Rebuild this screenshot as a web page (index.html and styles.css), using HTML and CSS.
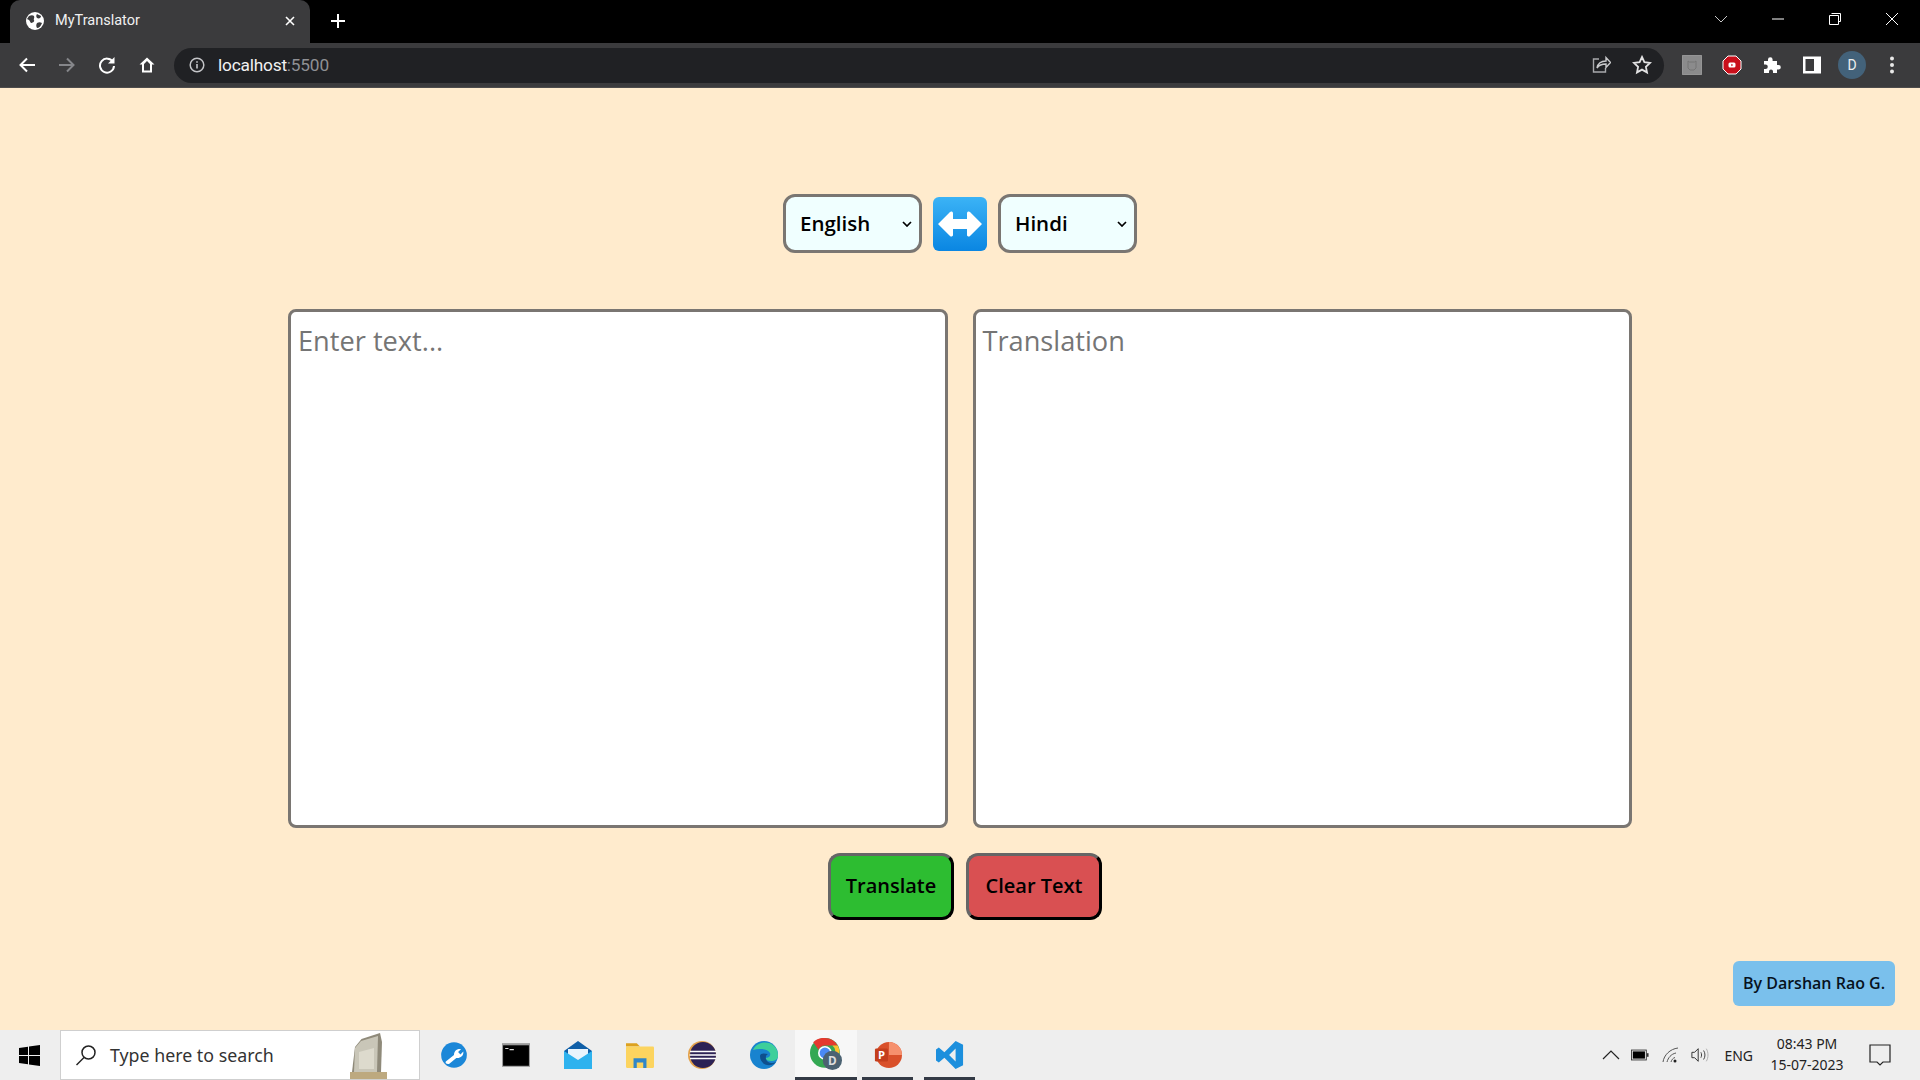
FILE: index.html
```html
<!DOCTYPE html>
<html lang="en">
<head>
  <meta charset="UTF-8" />
  <title>MyTranslator</title>
  <link rel="stylesheet" href="styles.css">
</head>
<body>

  <!-- Browser frame -->
  <header class="browser">
    <div class="tabstrip">
      <div class="tab">
        <svg class="favicon" viewBox="0 0 18 18"><circle cx="9" cy="9" r="9" fill="#fff"/><path d="M3 4c2-1 4-1 5 0 1 2-1 3 0 4 1 2-2 3-3 3-1-1-1-2-2-3L1 7zM11 2c1 1 3 1 4 2 0 2-2 3-4 2-1-1-1-3 0-4zM11 11c2-1 3-1 5 0-1 3-3 5-5 5-1-2-1-3 0-5z" fill="#3b3b3d"/></svg>
        <span class="tab-title">MyTranslator</span>
        <svg class="tab-close" viewBox="0 0 10 10"><path d="M1 1l8 8M9 1l-8 8" stroke="#fff" stroke-width="1.6"/></svg>
      </div>
      <svg class="new-tab" viewBox="0 0 14 14"><path d="M7 0v14M0 7h14" stroke="#fff" stroke-width="2"/></svg>
      <div class="window-controls">
        <svg class="win-ico" viewBox="0 0 14 14"><path d="M1 4l6 6 6-6" fill="none" stroke="#c8c8c8"/></svg>
        <svg class="win-ico" viewBox="0 0 14 14"><path d="M1 7h12" stroke="#fff"/></svg>
        <svg class="win-ico" viewBox="0 0 14 14"><path d="M3.500 1.500h9v8h-2M1.500 3.500h9v9h-9z" fill="none" stroke="#fff"/></svg>
        <svg class="win-ico" viewBox="0 0 14 14"><path d="M1 1l12 12M13 1L1 13" stroke="#fff"/></svg>
      </div>
    </div>
    <div class="toolbar">
      <svg class="tool-ico" viewBox="0 0 18 18"><path d="M17 9H3M9 2.500L2.500 9 9 15.500" fill="none" stroke="#fff" stroke-width="2"/></svg>
      <svg class="tool-ico" viewBox="0 0 18 18"><path d="M1 9h14M9 2.500L15.500 9 9 15.500" fill="none" stroke="#85868a" stroke-width="2"/></svg>
      <svg class="tool-ico" viewBox="0 0 18 18"><path d="M15 6a7 7 0 1 0 1 4" fill="none" stroke="#fff" stroke-width="2"/><path d="M16.500 1v6.500H10z" fill="#fff"/></svg>
      <svg class="tool-ico" viewBox="0 0 18 18"><path d="M9 1.500L1.500 8.500H4v8h10v-8h2.500zM6 14.500V8l3-3 3 3v6.500z" fill="#fff" fill-rule="evenodd"/></svg>
      <div class="omnibox">
        <svg class="info-ico" viewBox="0 0 16 16"><circle cx="8" cy="8" r="6.800" fill="none" stroke="#c4c5c8" stroke-width="1.500"/><path d="M8 7v4.500M8 4.200v1.600" stroke="#c4c5c8" stroke-width="1.600"/></svg>
        <span class="url">localhost<span class="url-port">:5500</span></span>
        <svg class="omni-ico share" viewBox="0 0 20 20"><path d="M8 4H2.500v13h12v-4" fill="none" stroke="#a8a9ac" stroke-width="1.400"/><path d="M6 13c1-5 5-7 9-7V2.500l4.500 5-4.500 5V9c-4 0-7 1-9 4z" fill="none" stroke="#c9cacc" stroke-width="1.400"/></svg>
        <svg class="omni-ico" viewBox="0 0 20 20"><path d="M10 2l2.400 5.200 5.600.7-4.100 3.900 1.100 5.600-5-2.800-5 2.800 1.100-5.600L2 7.900l5.600-.7z" fill="none" stroke="#e2e2e3" stroke-width="1.800"/></svg>
      </div>
      <div class="extensions">
        <svg class="ext-ico" viewBox="0 0 20 20"><rect width="20" height="20" rx="2" fill="#8b8b8c" stroke="#9f9f9f"/><path d="M6 6l1.500 1h5L14 6v7l-2 2H8l-2-2z" fill="none" stroke="#757575"/></svg>
        <svg class="ext-ico" viewBox="0 0 20 20"><path d="M6 1h8l5 5v8l-5 5H6l-5-5V6z" fill="#c90f1b" stroke="#fff" stroke-width="1"/><rect x="6.500" y="7.500" width="7" height="5" rx="1.500" fill="#fff"/><path d="M9.300 8.800l2 1.200-2 1.200z" fill="#c90f1b"/></svg>
        <svg class="ext-ico" viewBox="0 0 20 20"><path d="M2 6h4V4.500a2.300 2.300 0 0 1 4.600 0V6H15v4h1.500a2.300 2.300 0 0 1 0 4.600H15V18h-4v-1.500a2 2 0 0 0-4 0V18H2v-4h1.500a2.300 2.300 0 0 0 0-4.600H2z" fill="#fff"/></svg>
        <svg class="ext-ico" viewBox="0 0 20 20"><path d="M1 1.500h18v17H1zM3.500 4v12H12V4z" fill="#fff" fill-rule="evenodd"/></svg>
        <span class="avatar">D</span>
        <svg class="ext-ico" viewBox="0 0 20 20"><circle cx="10" cy="3.500" r="2" fill="#e8e8e8"/><circle cx="10" cy="10" r="2" fill="#e8e8e8"/><circle cx="10" cy="16.500" r="2" fill="#e8e8e8"/></svg>
      </div>
    </div>
  </header>

  <!-- Main Content -->
  <main class="page">
    <div class="lang-row">
      <select class="lang-select">
        <option>English</option>
      </select>
      <button class="swap-btn" aria-label="Swap languages">
        <svg viewBox="0 0 54 54" class="swap-ico"><path d="M5 27l12-12c1-1 3-.5 3 1v6h14v-6c0-1.500 2-2 3-1l12 12-12 12c-1 1-3 .5-3-1v-6H20v6c0 1.500-2 2-3 1z" fill="#fff"/></svg>
      </button>
      <select class="lang-select">
        <option>Hindi</option>
      </select>
    </div>

    <div class="text-row">
      <textarea class="text-box" placeholder="Enter text..."></textarea>
      <textarea class="text-box" placeholder="Translation" readonly></textarea>
    </div>

    <div class="action-row">
      <button class="action-btn translate">Translate</button>
      <button class="action-btn clear">Clear Text</button>
    </div>

    <div class="credit">By Darshan Rao G.</div>
  </main>

  <!-- Taskbar -->
  <footer class="taskbar">
    <div class="start">
      <svg class="start-ico" viewBox="0 0 21 21"><path d="M0 3l9-1.300V10H0zM10 1.500L21 0v10H10zM0 11h9v8.300L0 18zM10 11h11v10l-11-1.500z" fill="#000"/></svg>
    </div>
    <div class="search">
      <svg class="search-ico" viewBox="0 0 22 22"><circle cx="13.500" cy="8.500" r="6.500" fill="none" stroke="#222" stroke-width="1.500"/><path d="M9 13.500L1.500 21" stroke="#222" stroke-width="1.500"/></svg>
      <span class="search-text">Type here to search</span>
      <svg class="statue" viewBox="0 0 38 46"><path d="M6 14l6.500-8L31 0l2 9-1 30H3z" fill="#8f8a7a"/><path d="M6 15l6-7 17-5-1 36H5z" fill="#c9c6b8"/><path d="M10 19l15-4v21H10z" fill="#dddacd"/><rect x="1" y="39" width="37" height="7" fill="#bda97f"/></svg>
    </div>
    <div class="task-apps">
      <div class="app">
        <svg class="app-ico" viewBox="0 0 24 24"><circle cx="12" cy="12" r="11" fill="#1b87d8"/><path d="M5 17.500L12 12c0-3 2-5.500 6-5l-2.500 2.500 2 2L20 9c.5 4-3 6-6 5.500L8 19.500c-2 1-4-1-3-2z" fill="#fff"/></svg>
      </div>
      <div class="app">
        <svg class="app-ico" viewBox="0 0 26 24"><rect x="0" y="1" width="26" height="22" fill="#9b9b9b"/><rect x="1" y="3" width="24" height="19" fill="#000"/><path d="M3 6h3M7 7h4" stroke="#ddd"/></svg>
      </div>
      <div class="app">
        <svg class="app-ico" viewBox="0 0 28 28"><path d="M0 10L14 0l14 10v4H0z" fill="#0f5fa8"/><path d="M4 8h20v10H4z" fill="#eaf4fc"/><path d="M0 10l14 9 14-9v18H0z" fill="#2eb2ee"/></svg>
      </div>
      <div class="app">
        <svg class="app-ico" viewBox="0 0 26 26"><path d="M0 2h10l3 3H0z" fill="#dca11f"/><rect y="5" width="26" height="20" rx="1" fill="#fcd45f"/><path d="M7 25v-9h12v9h-3v-5h-6v5z" fill="#2f86c8"/></svg>
      </div>
      <div class="app">
        <svg class="app-ico" viewBox="0 0 28 28"><circle cx="14" cy="14" r="14" fill="#e3a14a"/><circle cx="15" cy="14" r="13" fill="#2c2255"/><path d="M2 10.500h26M1.500 14h27M2 17.500h26" stroke="#fff" stroke-width="1.500"/></svg>
      </div>
      <div class="app">
        <svg class="app-ico" viewBox="0 0 28 28"><circle cx="14" cy="14" r="14" fill="#1883cf"/><path d="M3 9c3-7 13-10 20-5 4 3 5 7 5 11 0 3-3 5-7 5-3 0-5-1-6-3 4 0 6-2 5-5-2-4-10-5-17-3z" fill="#3dcf9b"/><path d="M10 15c0 6 5 10 11 9 2-.5 4-1.500 5-3-4 2-9 1-10-3-.5-2 0-4 2-5-4-1-8-1-8 2z" fill="#0e4f8d"/></svg>
      </div>
      <div class="app active">
        <svg class="app-ico chrome-ico" viewBox="0 0 30 30"><circle cx="14" cy="14" r="14" fill="#34a853"/><path d="M14 0a14 14 0 0 1 12 7H14a7 7 0 0 0-6 4L3 4a14 14 0 0 1 11-4z" fill="#e5392e"/><path d="M26 7a14 14 0 0 1-9 20l5-10a7 7 0 0 0-1-10z" fill="#fbc02d"/><circle cx="14" cy="14" r="6.500" fill="#fff"/><circle cx="14" cy="14" r="5" fill="#4a8af4"/><circle cx="21" cy="21" r="9" fill="#4b6272"/><text x="21" y="25" class="chrome-badge">D</text></svg>
      </div>
      <div class="app small">
        <svg class="app-ico" viewBox="0 0 30 30"><circle cx="16" cy="15" r="14" fill="#d9502a"/><path d="M16 1a14 14 0 0 1 14 14H16z" fill="#f6906d"/><rect x="1" y="8" width="14" height="14" rx="1.500" fill="#c43e1c"/><text x="8" y="19.500" class="ppt-letter">P</text></svg>
      </div>
      <div class="app small">
        <svg class="app-ico" viewBox="0 0 30 30"><path d="M21 0l8 4v22l-8 4-12-12-6 5-3-2V9l3-2 6 5zM21 8l-7 7 7 7z" fill="#1c8fdd" fill-rule="evenodd"/></svg>
      </div>
    </div>
    <div class="tray">
      <svg class="tray-ico" viewBox="0 0 18 10"><path d="M1 9l8-8 8 8" fill="none" stroke="#222" stroke-width="1.200"/></svg>
      <svg class="tray-ico battery" viewBox="0 0 20 12"><rect x=".5" y=".5" width="16.500" height="11" fill="none" stroke="#333"/><rect x="2" y="2" width="13.500" height="8" fill="#000"/><rect x="17.500" y="4" width="2" height="4" fill="#333"/></svg>
      <svg class="tray-ico" viewBox="0 0 18 16"><path d="M1 15C2 8 8 2 16 1M5 15c1-4 4-8 9-9M9 15c.5-2 2-4 4-4.500" fill="none" stroke="#555"/><circle cx="13" cy="14" r="1.500" fill="#222"/></svg>
      <svg class="tray-ico" viewBox="0 0 20 16"><path d="M1 5h3l4-4v14l-4-4H1z" fill="none" stroke="#222"/><path d="M11 5c1 2 1 4 0 6M14 3c2 3 2 7 0 10" fill="none" stroke="#333"/><path d="M17 1c2.500 4 2.500 10 0 14" fill="none" stroke="#aaa"/></svg>
      <span class="tray-lang">ENG</span>
      <div class="clock">
        <span>08:43 PM</span>
        <span>15-07-2023</span>
      </div>
      <svg class="notify" viewBox="0 0 22 22"><path d="M1 1h20v17h-7l-3 3-3-3H1z" fill="none" stroke="#222" stroke-width="1.200"/></svg>
    </div>
  </footer>

</body>
</html>
```

FILE: styles.css
```css
* {
  box-sizing: border-box;
}

body {
  margin: 0;
  height: 1080px;
  overflow: hidden;
  display: flex;
  flex-direction: column;
  font-family: "Open Sans", "Noto Sans", sans-serif;
  background-color: blanchedalmond;
}

/* Browser frame */
.browser {
  height: 88px;
  flex-shrink: 0;
  font-family: Roboto, "Noto Sans", sans-serif;
}

.tabstrip {
  height: 43px;
  background-color: #000;
  display: flex;
  align-items: center;
}

.tab {
  width: 300px;
  height: 43px;
  margin-left: 10px;
  padding: 0 16px 2px;
  display: flex;
  align-items: center;
  background-color: #3b3b3d;
  border-radius: 10px 10px 0 0;
  color: #f1f1f1;
  font-size: 14.500px;
}

.favicon {
  width: 18px;
  height: 18px;
}

.tab-title {
  margin-left: 11px;
  flex: 1;
}

.tab-close {
  width: 10px;
  height: 10px;
  margin-right: -1px;
}

.new-tab {
  width: 14px;
  height: 14px;
  margin-left: 21px;
  margin-bottom: 1px;
}

.window-controls {
  margin-left: auto;
  display: flex;
  align-items: center;
  gap: 43px;
  padding: 0 21px 6px 0;
}

.win-ico {
  width: 14px;
  height: 14px;
}

.toolbar {
  height: 45px;
  display: flex;
  align-items: center;
  background-color: #3b3b3d;
  border-bottom: 1px solid #4d4c4c;
  padding-left: 18px;
}

.tool-ico {
  width: 18px;
  height: 18px;
  margin-right: 22px;
}

.omnibox {
  width: 1490px;
  height: 35px;
  margin-left: -4px;
  display: flex;
  align-items: center;
  background-color: #202124;
  border-radius: 18px;
  padding: 0 12px 0 15px;
}

.info-ico {
  width: 16px;
  height: 16px;
}

.url {
  margin-left: 13px;
  font-size: 17.300px;
  color: #f1f1f1;
  letter-spacing: -.2px;
}

.url-port {
  color: #8f9094;
}

.omni-ico {
  width: 20px;
  height: 20px;
  margin-left: 21px;
}

.share {
  margin-left: auto;
}

.extensions {
  display: flex;
  align-items: center;
  gap: 20px;
  margin-left: 18px;
}

.ext-ico {
  width: 20px;
  height: 20px;
}

.avatar {
  width: 28px;
  height: 28px;
  margin: 0 -4px;
  border-radius: 50%;
  background-color: #43627a;
  color: #eee;
  font-size: 14px;
  display: flex;
  align-items: center;
  justify-content: center;
}

/* Main Content */
.page {
  flex: 1;
  position: relative;
  padding-top: 106px;
  display: flex;
  flex-direction: column;
  align-items: center;
}

.lang-row {
  display: flex;
  align-items: center;
  gap: 11px;
}

.lang-select {
  appearance: none;
  width: 139px;
  height: 59px;
  padding: 0 24px 2px 14px;
  font-family: inherit;
  font-size: 20.500px;
  font-weight: 600;
  color: #000;
  background-color: #f0ffff;
  background-image: url("data:image/svg+xml,%3Csvg xmlns='http://www.w3.org/2000/svg' viewBox='0 0 10 6'%3E%3Cpath d='M1 1l4 4 4-4' fill='none' stroke='%23000' stroke-width='1.700'/%3E%3C/svg%3E");
  background-repeat: no-repeat;
  background-size: 10px 6px;
  background-position: right 7px center;
  border: 3px solid #7a7672;
  border-radius: 12px;
}

.swap-btn {
  width: 54px;
  height: 54px;
  padding: 0;
  border: 0;
  border-radius: 6px;
  background: linear-gradient(#3bb3f6, #0a86e2);
}

.swap-ico {
  display: block;
  width: 54px;
  height: 54px;
}

.text-row {
  width: 1344px;
  display: grid;
  grid-template-columns: 1fr 1fr;
  gap: 25px;
  margin-top: 56px;
}

.text-box {
  width: 100%;
  height: 519px;
  padding: 10px 7px;
  font-family: inherit;
  font-size: 27.200px;
  background-color: #fff;
  border: 3px solid #7a7672;
  border-radius: 8px;
  resize: none;
}

.text-box::placeholder {
  color: #757575;
}

.action-row {
  display: flex;
  gap: 12px;
  margin-top: 25px;
  margin-left: 10px;
}

.action-btn {
  height: 67px;
  padding: 0 0 2px;
  font-family: inherit;
  font-size: 20px;
  font-weight: 600;
  white-space: nowrap;
  color: #000;
  border: 3px solid;
  border-color: #666 #000 #000 #666;
  border-radius: 12px;
}

.translate {
  width: 126px;
  background-color: #2dbd31;
}

.clear {
  width: 136px;
  background-color: #d95052;
}

.credit {
  position: absolute;
  right: 25px;
  bottom: 24px;
  width: 162px;
  height: 45px;
  padding-bottom: 2px;
  display: flex;
  align-items: center;
  justify-content: center;
  background-color: #7ac0ec;
  border-radius: 6px;
  font-size: 16px;
  font-weight: 600;
  color: #07121d;
}

/* Taskbar */
.taskbar {
  height: 50px;
  flex-shrink: 0;
  display: flex;
  align-items: center;
  background-color: #eeeeee;
}

.start {
  width: 60px;
  padding-right: 2px;
  display: flex;
  justify-content: center;
}

.start-ico {
  width: 21px;
  height: 21px;
}

.search {
  width: 360px;
  height: 50px;
  display: flex;
  align-items: center;
  padding-left: 14px;
  background-color: #fff;
  border: 1px solid #cfcfcf;
  overflow: hidden;
}

.search-ico {
  width: 22px;
  height: 22px;
}

.search-text {
  margin-left: 13px;
  font-family: "Noto Sans", sans-serif;
  font-size: 17.800px;
  color: #333;
}

.statue {
  width: 38px;
  height: 46px;
  margin-left: auto;
  margin-right: 32px;
  align-self: flex-end;
}

.task-apps {
  display: flex;
  margin-left: 3px;
  height: 50px;
}

.app {
  width: 62px;
  height: 50px;
  display: flex;
  align-items: center;
  justify-content: center;
}

.app.small,
.app.active {
  position: relative;
}

.app.active {
  background-color: #f7f7f7;
  border-bottom: 3px solid #333a45;
}

.app.small::after {
  content: "";
  position: absolute;
  left: 5px;
  right: 6px;
  bottom: 0;
  height: 3px;
  background-color: #333a45;
}

.app-ico {
  width: 28px;
  height: 28px;
}

.chrome-ico {
  width: 32px;
  height: 32px;
}

.chrome-badge {
  font-family: "Open Sans", sans-serif;
  font-size: 11px;
  font-weight: 700;
  fill: #ddd;
  text-anchor: middle;
}

.ppt-letter {
  font-family: "Open Sans", sans-serif;
  font-size: 12px;
  font-weight: 700;
  fill: #fff;
  text-anchor: middle;
}

.tray {
  margin-left: auto;
  display: flex;
  align-items: center;
  gap: 11px;
  padding-right: 25px;
  color: #222;
}

.tray-ico {
  width: 18px;
  height: 16px;
}

.battery {
  margin-right: 2px;
}

.tray-lang {
  margin-left: 4px;
  font-family: "Noto Sans", sans-serif;
  font-size: 14px;
}

.clock {
  width: 90px;
  margin-left: -2px;
  padding-bottom: 2px;
  display: flex;
  flex-direction: column;
  align-items: center;
  gap: 2px;
  font-family: "Noto Sans", sans-serif;
  font-size: 14px;
}

.notify {
  width: 22px;
  height: 22px;
  margin-left: 6px;
  margin-right: 4px;
}
```
